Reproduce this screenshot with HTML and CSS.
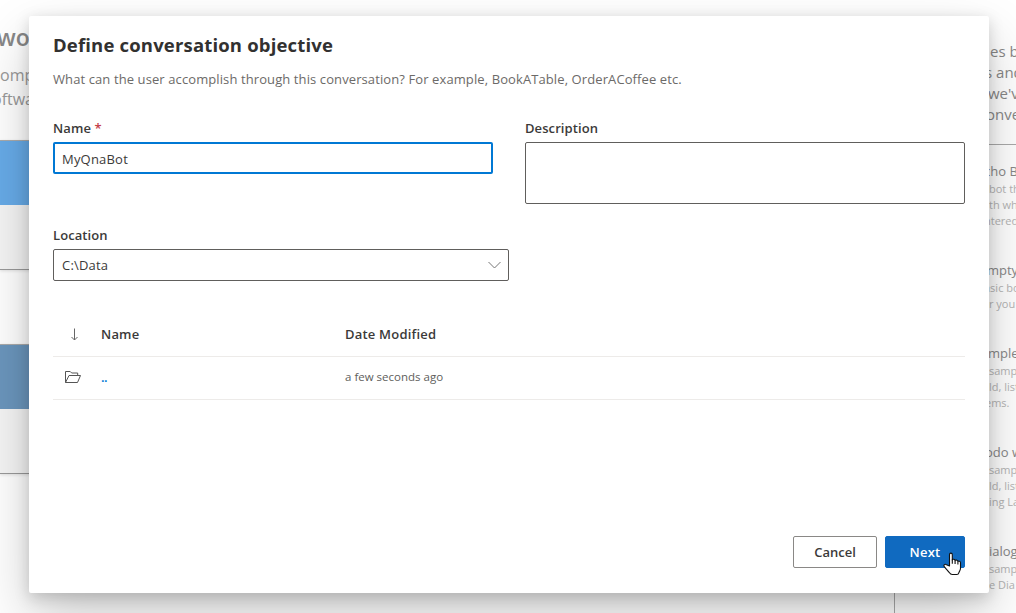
FILE: index.html
```html
<!DOCTYPE html>
<html lang="en">
<head>
<meta charset="utf-8">
<title>Define conversation objective</title>
<link rel="stylesheet" href="styles.css">
</head>
<body>
<div class="page">
  <main class="home">
    <h1 class="home-title">wo</h1>
    <p class="home-text">omp<br><span class="outdent">oftwa</span></p>
    <div class="tile"><div class="tile-art"></div></div>
    <div class="tile"><div class="tile-art tile-art-dim"></div></div>
  </main>
  <aside class="samples">
    <div class="intro">
      <div>es b</div><div class="back-5">s and</div><div class="back-2">we've</div><div class="back-4">onve</div>
    </div>
    <div class="sample"><h3 class="back-5">cho B</h3><p>bot th</p><p>th wh</p><p class="back-5">ntered</p></div>
    <div class="sample"><h3 class="back-2">mpty</h3><p class="back-5">asic bo</p><p>r you</p></div>
    <div class="sample"><h3 class="back-1">mple</h3><p>samp</p><p>ld, list</p><p class="back-4">ems.</p></div>
    <div class="sample"><h3 class="back-4">odo w</h3><p>samp</p><p>ld, list</p><p>ing La</p></div>
    <div class="sample"><h3>ialog</h3><p>samp</p><p>e Dia</p></div>
  </aside>
</div>

<section class="dialog">
  <h2 class="title">Define conversation objective</h2>
  <p class="subtitle">What can the user accomplish through this conversation? For example, BookATable, OrderACoffee etc.</p>
  <div class="fields">
    <div class="field">
      <div class="label">Name <span class="required">*</span></div>
      <div class="input input-active">MyQnaBot</div>
    </div>
    <div class="field">
      <div class="label">Description</div>
      <div class="input textarea"></div>
    </div>
  </div>
  <div class="location">
    <div class="label">Location</div>
    <div class="input select"><span>C:\Data</span>
      <svg width="13" height="8" viewBox="0 0 13 8"><path d="M.5 1l6 6 6-6" fill="none" stroke="#777" stroke-width="1"/></svg>
    </div>
  </div>
  <div class="files">
    <div class="row head">
      <span class="icon"><svg width="18" height="16" viewBox="0 0 18 16"><path d="M10.5 2.5v11.5M7.5 11l3 3 3-3" fill="none" stroke="#666" stroke-width="1"/></svg></span>
      <span class="name">Name</span><span class="date">Date Modified</span>
    </div>
    <div class="row entry">
      <span class="icon"><svg width="18" height="16" viewBox="0 0 18 16"><path d="M1.5 13.5v-11h4.7l1.5 1.5h6v2.5M1.5 13.5L5 6.5h11.5l-3 7z" fill="none" stroke="#555" stroke-width="1"/></svg></span>
      <span class="name link">..</span><span class="date small">a few seconds ago</span>
    </div>
  </div>
  <div class="actions">
    <button class="button">Cancel</button>
    <button class="button primary">Next</button>
  </div>
  <svg class="cursor" width="20" height="24" viewBox="0 0 20 24"><path d="M6.5 14V2.8C6.5.6 9.3.6 9.3 2.8v5.1c.4-1 2.7-.8 2.8.7.5-.9 2.6-.7 2.8.9.6-.8 2.6-.4 2.6 1.2v5.8c0 1.5-1.4 3.1-1.7 4.4-.2.9-.9 1.6-2 1.6H9.2c-1.3 0-2.1-.7-2.7-1.7C5.5 19.2 3 17 1.3 14.6c-1.1-1.7.7-3 2.2-1.8z" fill="#fff" stroke="#111" stroke-width="1.1" stroke-linejoin="round"/><path d="M9.3 7.5v4.3M12.1 8.5v3.6M14.9 9.5v3" stroke="#111" stroke-width="1.1"/></svg>
</section>
</body>
</html>
```
FILE: styles.css
```css
* { box-sizing: border-box; }
body { margin: 0; width: 1016px; height: 613px; overflow: hidden; position: relative; background: #fff; font: 13px/20px "Open Sans", "Noto Sans", sans-serif; color: #3b3a39; }
h1, h2, h3, p { margin: 0; font-weight: 400; }

.page { display: flex; height: 613px; overflow: hidden; }
.home { width: 894px; padding-top: 20px; color: #999; }
.home-title { font-size: 23px; line-height: 34px; height: 36px; font-weight: 600; margin-left: -3px; color: #888; }
.home-text { font-size: 16px; line-height: 24px; padding-top: 7px; height: 84px; }
.outdent { margin-left: -8px; }
.tile { width: 200px; height: 130px; margin-bottom: 74px; background: #f5f5f5; border-bottom: 1px solid #999; border-top: 1px solid #aaa; box-shadow: 0 1px 3px rgba(0,0,0,.12); }
.tile-art { height: 64px; background: #67abe8; }
.tile-art-dim { background: #6b96bd; }

.samples { width: 122px; height: 593px; margin-top: 20px; border-left: 1px solid #aaa; padding-top: 21px; white-space: nowrap; overflow: hidden; color: #888; }
.intro { height: 104px; padding-left: 95px; font-size: 15px; line-height: 21px; border-bottom: 1px solid #aaa; margin-bottom: 17px; }
.sample { padding-left: 94px; margin-bottom: 31.9px; }
.sample h3 { font-size: 13px; line-height: 19px; }
.sample p { font-size: 11px; line-height: 16px; color: #b5b5b5; }
.samples .back-1 { margin-left: -1px; }
.samples .back-2 { margin-left: -2px; }
.samples .back-4 { margin-left: -4px; }
.samples .back-5 { margin-left: -5px; }

.dialog { position: absolute; left: 29px; top: 16px; width: 960px; height: 577px; padding: 16px 24px 25px; display: flex; flex-direction: column; background: #fff; border-radius: 2px; box-shadow: 0 25.6px 57.6px rgba(0,0,0,.2), 0 4.8px 14.4px rgba(0,0,0,.17); }
.title { font-size: 18.5px; line-height: 26px; height: 27px; font-weight: 700; letter-spacing: .17px; color: #323130; }
.subtitle { font-size: 13px; line-height: 20px; margin-top: 10px; letter-spacing: .1px; color: #6c6a68; }
.fields { display: grid; grid-template-columns: 440px 440px; gap: 32px; margin-top: 29px; }
.label { font-weight: 600; line-height: 20px; height: 24px; letter-spacing: .09px; }
.required { color: #c4414a; }
.input { height: 32px; padding: 0 8px; line-height: 30px; border: 1px solid #605e5c; border-radius: 2px; letter-spacing: .2px; }
.input-active { border: 2px solid #0078d4; padding: 0 7px; line-height: 30px; }
.textarea { height: 62px; }
.location { width: 456px; margin-top: 21px; }
.select { display: flex; align-items: center; justify-content: space-between; padding-right: 7px; }
.files { margin-top: 31px; }
.row { display: flex; align-items: center; height: 43px; border-bottom: 1px solid #edebe9; }
.head { height: 45px; font-weight: 600; letter-spacing: .2px; }
.entry { padding-bottom: 2px; }
.icon { width: 48px; padding-left: 11px; display: flex; }
.name { width: 244px; }
.link { color: #0078d4; font-weight: 600; letter-spacing: -.5px; }
.small { font-size: 11.5px; color: #605e5c; }
.actions { display: flex; justify-content: flex-end; gap: 8px; margin-top: auto; }
.button { height: 32px; width: 84px; padding: 0; border: 1px solid #8a8886; border-radius: 2px; background: #fff; color: #3b3a39; font: 600 13px/20px "Open Sans", sans-serif; }
.primary { width: 80px; background: #106ac0; border-color: #106ac0; color: #fff; letter-spacing: .2px; }
.cursor { position: absolute; left: 914px; top: 536px; }
```
